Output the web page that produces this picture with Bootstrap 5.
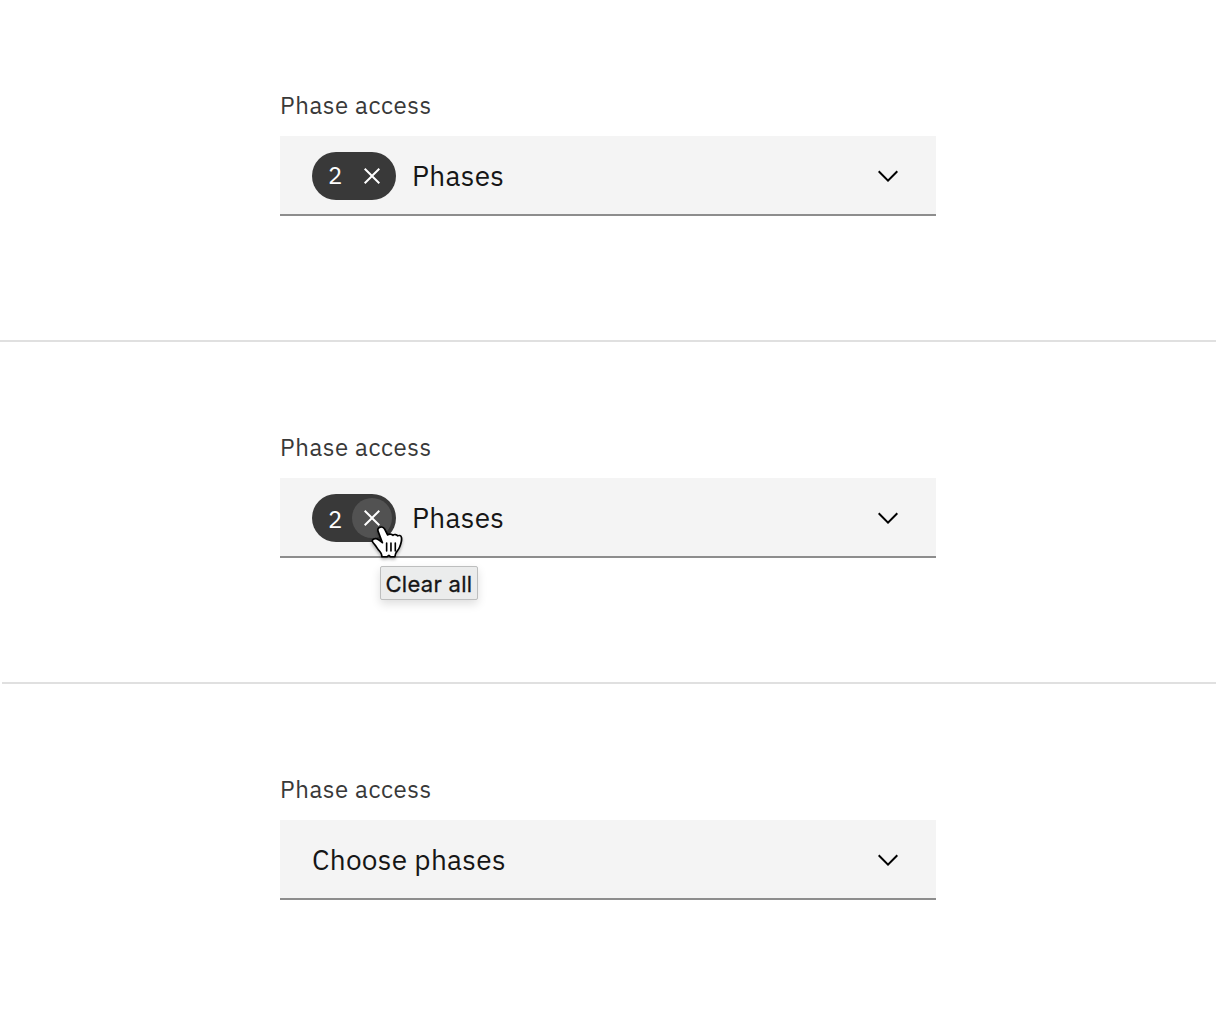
<!DOCTYPE html>
<html lang="en">
<head>
<meta charset="utf-8">
<meta name="viewport" content="width=device-width, initial-scale=1">
<title>Phase access</title>
<link rel="stylesheet" href="https://cdn.jsdelivr.net/npm/bootstrap@5.3.0/dist/css/bootstrap.min.css">
<style>
body { font-family: "IBM Plex Sans", Roboto, "Liberation Sans", sans-serif; color: #161616; background: #fff; }
.demo { height: 342px; padding-top: 89px; border-bottom: 2px solid #e0e0e0; }
.demo-inset { margin-left: 2px; }
.demo-inset .field { left: -1px; }
.demo-last { border-bottom: 0; height: 340px; }
.field { width: 656px; }
.field-label { font-size: 24px; line-height: 32px; margin-bottom: 15px; letter-spacing: .6px; color: #393939; }
.picker { height: 80px; padding: 2px 32px 0; background: #f4f4f4; border: 0; border-bottom: 2px solid #8d8d8d; font-size: 28px; line-height: 36px; color: #161616; }
.picker-text { letter-spacing: .3px; }
.tag { width: 84px; height: 48px; margin-right: 16px; padding: 0 4px 0 16px; border-radius: 24px; background: #393939; color: #fff; font-size: 24px; line-height: 32px; }
.count-high { padding-bottom: 2px; }
.count-low { padding-top: 2px; }
.clear { width: 40px; height: 40px; }
.clear-hover { background: #525252; }
.pointer { left: 56px; top: 28px; filter: drop-shadow(0 2px 1.5px rgba(0,0,0,.3)); z-index: 2; }
.tip { left: 68px; top: 72px; width: 98px; height: 34px; padding: 1px 0 0; border: 1px solid #bdbebe; border-radius: 2px; background: #ebecec; box-shadow: 0 4px 10px rgba(0,0,0,.13); color: #161616; font-family: Inter, Roboto, sans-serif; font-size: 22px; font-weight: 400; -webkit-text-stroke: .3px #161616; line-height: 32px; letter-spacing: .3px; text-align: center; }
</style>
</head>
<body>
<main class="overflow-hidden">
  <section class="demo">
    <div class="field mx-auto">
      <div class="field-label">Phase access</div>
      <div class="picker d-flex align-items-center" role="button">
        <div class="tag d-flex align-items-center justify-content-between flex-shrink-0">
          <span class="count-high">2</span>
          <span class="clear rounded-circle d-flex align-items-center justify-content-center">
            <svg width="32" height="32" viewBox="0 0 32 32" fill="#fff"><path d="M24 9.4 22.6 8 16 14.6 9.4 8 8 9.4l6.6 6.6L8 22.6 9.4 24l6.6-6.6 6.6 6.6 1.4-1.4-6.6-6.6L24 9.4z"/></svg>
          </span>
        </div>
        <span class="picker-text">Phases</span>
        <svg class="ms-auto" width="32" height="32" viewBox="0 0 16 16" fill="#000"><path d="M8 11 3 6l.7-.7L8 9.6l4.3-4.3.7.7z"/></svg>
      </div>
    </div>
  </section>

  <section class="demo demo-inset">
    <div class="field mx-auto position-relative">
      <div class="field-label">Phase access</div>
      <div class="picker d-flex align-items-center" role="button">
        <div class="tag d-flex align-items-center justify-content-between flex-shrink-0 position-relative">
          <span class="count-low">2</span>
          <span class="clear clear-hover rounded-circle d-flex align-items-center justify-content-center">
            <svg width="32" height="32" viewBox="0 0 32 32" fill="#fff"><path d="M24 9.4 22.6 8 16 14.6 9.4 8 8 9.4l6.6 6.6L8 22.6 9.4 24l6.6-6.6 6.6 6.6 1.4-1.4-6.6-6.6L24 9.4z"/></svg>
          </span>
          <svg class="pointer position-absolute" width="39" height="38" viewBox="0 0 36 38" preserveAspectRatio="none">
            <path d="M11.2 5.2C9.2 5.8 8.7 7.5 9.4 9.5l3.9 11.2c-1.6-1.5-3.2-3-4.8-3.7-2.1-.9-4.5.2-4.6 2 0 1 .9 2 2 3.2 1.6 1.8 2.4 4 3.8 5.7 1.3 1.6 2.6 3 2.8 4.5l.4 2.4h4.5l1.9-1.5 1.6 1.5h3.9c.2-2.5.8-4.2 2.5-6.3 2.1-2.6 2.7-5.4 3.4-8.7.4-2.1.5-3.3.1-4.7-.5-1.7-2.2-2-3.5-1.2-.7-1.5-3.1-1.8-4.4-.6-1-1.5-3.5-1.6-4.8-.4L15.4 7.2c-.8-1.7-2.5-2.5-4.2-2z" fill="#fff" stroke="#000" stroke-width="1.6" stroke-linejoin="round"/>
            <path d="M17.2 21v8M21.2 21v8M25.2 21v8" fill="none" stroke="#000" stroke-width="1.5" stroke-linecap="round"/>
          </svg>
          <span class="tip position-absolute text-nowrap">Clear all</span>
        </div>
        <span class="picker-text">Phases</span>
        <svg class="ms-auto" width="32" height="32" viewBox="0 0 16 16" fill="#000"><path d="M8 11 3 6l.7-.7L8 9.6l4.3-4.3.7.7z"/></svg>
      </div>
    </div>
  </section>

  <section class="demo demo-last">
    <div class="field mx-auto">
      <div class="field-label">Phase access</div>
      <div class="picker d-flex align-items-center" role="button">
        <span class="picker-text">Choose phases</span>
        <svg class="ms-auto" width="32" height="32" viewBox="0 0 16 16" fill="#000"><path d="M8 11 3 6l.7-.7L8 9.6l4.3-4.3.7.7z"/></svg>
      </div>
    </div>
  </section>
</main>
<script src="https://cdn.jsdelivr.net/npm/bootstrap@5.3.0/dist/js/bootstrap.bundle.min.js"></script>
</body>
</html>
